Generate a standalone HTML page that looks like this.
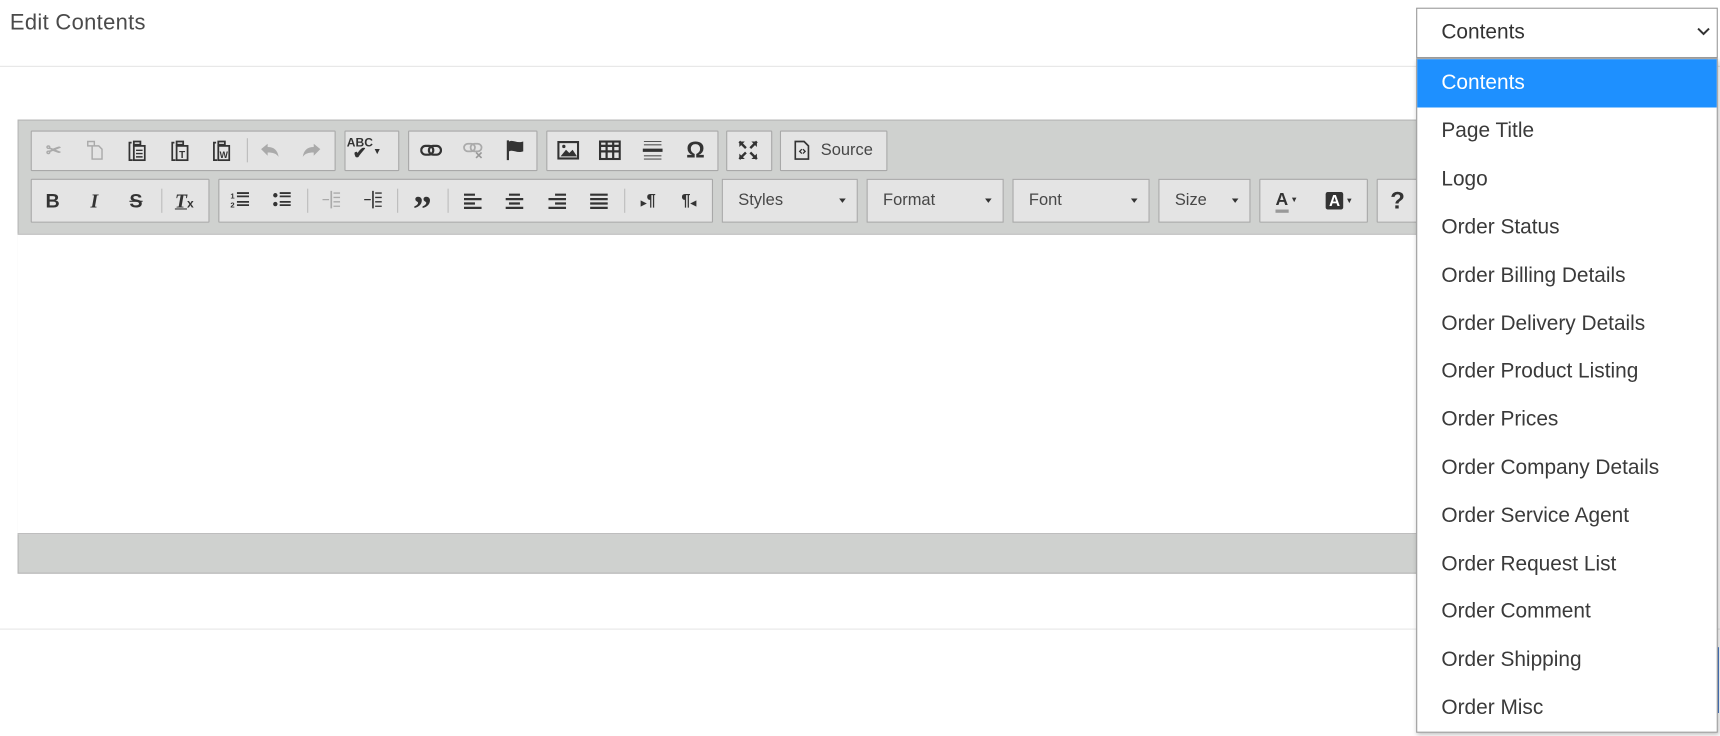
<!DOCTYPE html>
<html><head><meta charset="utf-8"><style>
html,body{margin:0;padding:0;width:1720px;height:736px;overflow:hidden;background:#fff;}
#s{position:absolute;left:0;top:0;width:1568px;height:671px;transform:scale(1.09694);transform-origin:0 0;font-family:"Liberation Sans",sans-serif;}
.a{position:absolute;}
.title{left:9px;top:10px;font-size:20px;color:#4a4a4a;font-weight:normal;letter-spacing:0.3px}
.hl{height:1px;background:#e6e6e6;left:0;width:1568px}
.ed{left:16px;top:109px;width:1540px;height:414px;border:1px solid #b6b6b6;background:#cfd1cf;box-sizing:border-box}
.ct{left:16px;top:213px;width:1540px;height:274px;background:#fff;border-top:1px solid #b6b6b6;border-bottom:1px solid #b6b6b6;box-sizing:border-box}
.g{position:absolute;background:#e4e4e4;border:1px solid #a8a8a8;box-sizing:border-box;border-radius:1px}
.i{position:absolute;transform:translate(-50%,-50%);color:#333;font-weight:bold;font-size:17px;line-height:1;white-space:nowrap}
.dis{color:#aaa}
.sep{position:absolute;width:1px;height:22px;background:#bbb;transform:translateY(-50%)}
.cb{position:absolute;background:#e4e4e4;border:1px solid #a8a8a8;box-sizing:border-box;font-size:15px;color:#474747;line-height:37px;padding-left:14px}
.cb:after{content:"";position:absolute;right:10px;top:17px;border-left:3px solid transparent;border-right:3px solid transparent;border-top:4px solid #333}
.dd{left:1291px;top:53px;width:275px;height:615px;background:#fff;border:1px solid #999;box-sizing:border-box;box-shadow:1px 2px 4px rgba(0,0,0,.25)}
.sel{left:1291px;top:7px;width:275px;height:46px;background:#fff;border:1px solid #999;box-sizing:border-box;font-size:19px;color:#333;line-height:44px;padding-left:22px}
.it{position:absolute;left:0;width:273px;height:44px;line-height:44px;padding-left:22px;box-sizing:border-box;font-size:19px;color:#3a3a3a}
svg{display:block}
</style></head><body><div id="s">
<div class="a title">Edit Contents</div>
<div class="a hl" style="top:60px"></div>
<div class="a hl" style="top:573px"></div>
<div class="a ed"></div>
<div class="a ct"></div>

<div class="g" style="left:28px;top:119px;width:278px;height:37px"></div>
<div class="g" style="left:314px;top:119px;width:50px;height:37px"></div>
<div class="g" style="left:372px;top:119px;width:118px;height:37px"></div>
<div class="g" style="left:498px;top:119px;width:157px;height:37px"></div>
<div class="g" style="left:662px;top:119px;width:42px;height:37px"></div>
<div class="g" style="left:711px;top:119px;width:98px;height:37px"></div>
<div class="i dis" style="left:49px;top:137px">✂</div>
<div class="i dis" style="left:86px;top:137px"><svg width="16" height="18"><path d="M2 1h6v4h-6zM6 5h6l3 3v9h-9z" fill="none" stroke="#aaa" stroke-width="1.3"/></svg></div>
<div class="i" style="left:125px;top:137px"><svg width="16" height="20"><path d="M3 3h-2v16h3M5 2h6v3h-6z" fill="none" stroke="#333" stroke-width="1.6"/><rect x="5" y="6" width="10" height="13" fill="none" stroke="#333" stroke-width="1.6"/><path d="M7 10h6M7 13h6M7 16h6" stroke="#333" stroke-width="1.3"/></svg></div>
<div class="i" style="left:164px;top:137px"><svg width="16" height="20"><path d="M3 3h-2v16h3M5 2h6v3h-6z" fill="none" stroke="#333" stroke-width="1.6"/><rect x="5" y="6" width="10" height="13" fill="none" stroke="#333" stroke-width="1.6"/><text x="10" y="17" font-size="9" text-anchor="middle" font-family="Liberation Sans" font-weight="bold" fill="#333">T</text></svg></div>
<div class="i" style="left:202px;top:137px"><svg width="16" height="20"><path d="M3 3h-2v16h3M5 2h6v3h-6z" fill="none" stroke="#333" stroke-width="1.6"/><rect x="5" y="6" width="10" height="13" fill="none" stroke="#333" stroke-width="1.6"/><text x="10" y="17" font-size="8" text-anchor="middle" font-family="Liberation Sans" font-weight="bold" fill="#333">W</text></svg></div>
<div class="sep" style="left:225px;top:137px"></div>
<div class="i dis" style="left:246px;top:137px"><svg width="18" height="14"><path d="M1 6l6-5v3c6 0 9 3 10 9-2-3-5-4-10-4v3z" fill="#aaa"/></svg></div>
<div class="i dis" style="left:284px;top:137px"><svg width="18" height="14"><path d="M17 6l-6-5v3c-6 0-9 3-10 9 2-3 5-4 10-4v3z" fill="#aaa"/></svg></div>
<div class="i" style="left:332px;top:137px;font-size:11px"><span style="display:inline-block;text-align:center;line-height:9px">ABC<br><span style="font-size:15px">✔</span></span><span style="font-size:8px;vertical-align:4px">▼</span></div>
<div class="i" style="left:393px;top:137px"><svg width="20" height="12"><rect x="1" y="2" width="11" height="8" rx="4" fill="none" stroke="#333" stroke-width="2"/><rect x="8" y="2" width="11" height="8" rx="4" fill="none" stroke="#333" stroke-width="2"/></svg></div>
<div class="i" style="left:432px;top:137px"><svg width="20" height="16"><rect x="1" y="2" width="10" height="7" rx="3.5" fill="none" stroke="#aaa" stroke-width="1.6"/><rect x="7" y="2" width="10" height="7" rx="3.5" fill="none" stroke="#aaa" stroke-width="1.6"/><path d="M12 10l5 5M17 10l-5 5" stroke="#999" stroke-width="1.5"/></svg></div>
<div class="i" style="left:470px;top:137px"><svg width="18" height="20"><path d="M2 1v18" stroke="#333" stroke-width="2"/><path d="M3 2c4-2 7 2 13 0v9c-6 2-9-2-13 0z" fill="#333"/></svg></div>
<div class="i" style="left:518px;top:137px"><svg width="20" height="17"><rect x="1" y="1" width="18" height="15" fill="none" stroke="#333" stroke-width="2"/><path d="M3 14l5-6 3 3 3-3 4 6z" fill="#333"/><circle cx="6" cy="5" r="1.5" fill="#333"/></svg></div>
<div class="i" style="left:556px;top:137px"><svg width="20" height="18"><rect x="1" y="1" width="18" height="16" fill="none" stroke="#333" stroke-width="2"/><path d="M1 5h18M1 10h18M7 1v16M13 1v16" stroke="#333" stroke-width="2"/></svg></div>
<div class="i" style="left:595px;top:137px"><svg width="20" height="20"><path d="M2 2h16M2 5h16M2 15h16M2 18h16" stroke="#555" stroke-width="1"/><path d="M1 10h18" stroke="#333" stroke-width="3"/></svg></div>
<div class="i" style="left:634px;top:137px;font-size:21px">Ω</div>
<div class="i" style="left:682px;top:137px"><svg width="18" height="18"><path d="M1 1l6 6M17 1l-6 6M1 17l6-6M17 17l-6-6" stroke="#333" stroke-width="2.2"/><path d="M1 1h5l-5 5zM17 1h-5l5 5zM1 17h5l-5-5zM17 17h-5l5-5z" fill="#333"/></svg></div>
<div class="i" style="left:731px;top:137px"><svg width="14" height="18"><path d="M1 1h8l4 4v12h-12z" fill="none" stroke="#333" stroke-width="1.5"/><path d="M7 8l-2 2 2 2M8 8l2 2-2 2" fill="none" stroke="#333" stroke-width="1.2"/></svg></div>
<div class="i" style="left:772px;top:137px;font-weight:normal;font-size:15px;color:#474747">Source</div>

<div class="g" style="left:28px;top:163px;width:163px;height:40px"></div>
<div class="g" style="left:199px;top:163px;width:451px;height:40px"></div>
<div class="cb" style="left:658px;top:163px;width:124px;height:40px">Styles</div>
<div class="cb" style="left:790px;top:163px;width:125px;height:40px">Format</div>
<div class="cb" style="left:923px;top:163px;width:125px;height:40px">Font</div>
<div class="cb" style="left:1056px;top:163px;width:84px;height:40px">Size</div>
<div class="g" style="left:1148px;top:163px;width:99px;height:40px"></div>
<div class="g" style="left:1255px;top:163px;width:60px;height:40px"></div>
<div class="i" style="left:48px;top:183px;font-size:18px">B</div>
<div class="i" style="left:86px;top:183px;font-size:18px;font-style:italic;font-family:'Liberation Serif',serif">I</div>
<div class="i" style="left:124px;top:183px;font-size:18px;text-decoration:line-through">S</div>
<div class="sep" style="left:147px;top:183px"></div>
<div class="i" style="left:168px;top:183px;font-size:18px;font-style:italic;font-family:'Liberation Serif',serif"><u>T</u><span style="font-size:11px;font-style:normal;font-family:'Liberation Sans'">x</span></div>
<div class="i" style="left:219px;top:182px"><svg width="18" height="16"><text x="0" y="7" font-size="7" font-family="Liberation Sans" fill="#333">1</text><text x="0" y="15" font-size="7" font-family="Liberation Sans" fill="#333">2</text><path d="M6 2h11M6 5h11M6 10h11M6 13h11" stroke="#333" stroke-width="1.6"/></svg></div>
<div class="i" style="left:257px;top:182px"><svg width="18" height="16"><circle cx="3" cy="4" r="2" fill="#333"/><circle cx="3" cy="12" r="2" fill="#333"/><path d="M7 2h10M7 5h10M7 10h10M7 13h10" stroke="#333" stroke-width="1.6"/></svg></div>
<div class="sep" style="left:280px;top:183px"></div>
<div class="i" style="left:302px;top:182px"><svg width="18" height="18"><path d="M9 1v16" stroke="#aaa" stroke-width="1.5"/><path d="M11 3h6M11 7h6M11 11h6M11 15h6M1 9h6" stroke="#aaa" stroke-width="1.2"/></svg></div>
<div class="i" style="left:340px;top:182px"><svg width="18" height="18"><path d="M9 1v16" stroke="#333" stroke-width="1.5"/><path d="M11 3h6M11 7h6M11 11h6M11 15h6M1 9h6" stroke="#333" stroke-width="1.2"/></svg></div>
<div class="sep" style="left:362px;top:183px"></div>
<div class="i" style="left:385px;top:192px;font-size:34px;font-family:'Liberation Serif',serif">”</div>
<div class="sep" style="left:408px;top:183px"></div>
<div class="i" style="left:431px;top:183px"><svg width="18" height="15"><path d="M1 2h10M1 6h16M1 10h10M1 14h16" stroke="#333" stroke-width="2"/></svg></div>
<div class="i" style="left:469px;top:183px"><svg width="18" height="15"><path d="M4 2h10M1 6h16M4 10h10M1 14h16" stroke="#333" stroke-width="2"/></svg></div>
<div class="i" style="left:508px;top:183px"><svg width="18" height="15"><path d="M7 2h10M1 6h16M7 10h10M1 14h16" stroke="#333" stroke-width="2"/></svg></div>
<div class="i" style="left:546px;top:183px"><svg width="18" height="15"><path d="M1 2h16M1 6h16M1 10h16M1 14h16" stroke="#333" stroke-width="2"/></svg></div>
<div class="sep" style="left:569px;top:183px"></div>
<div class="i" style="left:591px;top:183px;font-size:15px"><span style="font-size:7px">▶</span>¶</div>
<div class="i" style="left:628px;top:183px;font-size:15px">¶<span style="font-size:7px">◀</span></div>
<div class="i" style="left:1173px;top:183px;font-size:16px"><span style="border-bottom:3px solid #999">A</span><span style="font-size:7px;vertical-align:3px"> ▼</span></div>
<div class="i" style="left:1221px;top:183px;font-size:14px"><span style="background:#333;color:#fff;padding:0 3px;border-radius:2px">A</span><span style="font-size:7px;vertical-align:3px"> ▼</span></div>
<div class="i" style="left:1274px;top:183px;font-size:22px">?</div>

<div class="a" style="left:1563px;top:590px;width:4px;height:60px;background:#3a6fc4"></div>
<div class="a sel">Contents<svg style="position:absolute;right:6px;top:17px" width="12" height="8"><path d="M1 1l5 5 5-5" fill="none" stroke="#333" stroke-width="1.8"/></svg></div>
<div class="a dd">
<div class="it" style="top:0;background:#1e90ff;color:#fff">Contents</div>
<div class="it" style="top:44px">Page Title</div>
<div class="it" style="top:88px">Logo</div>
<div class="it" style="top:132px">Order Status</div>
<div class="it" style="top:176px">Order Billing Details</div>
<div class="it" style="top:220px">Order Delivery Details</div>
<div class="it" style="top:263px">Order Product Listing</div>
<div class="it" style="top:307px">Order Prices</div>
<div class="it" style="top:351px">Order Company Details</div>
<div class="it" style="top:395px">Order Service Agent</div>
<div class="it" style="top:439px">Order Request List</div>
<div class="it" style="top:482px">Order Comment</div>
<div class="it" style="top:526px">Order Shipping</div>
<div class="it" style="top:570px">Order Misc</div>
</div>
</div></body></html>
